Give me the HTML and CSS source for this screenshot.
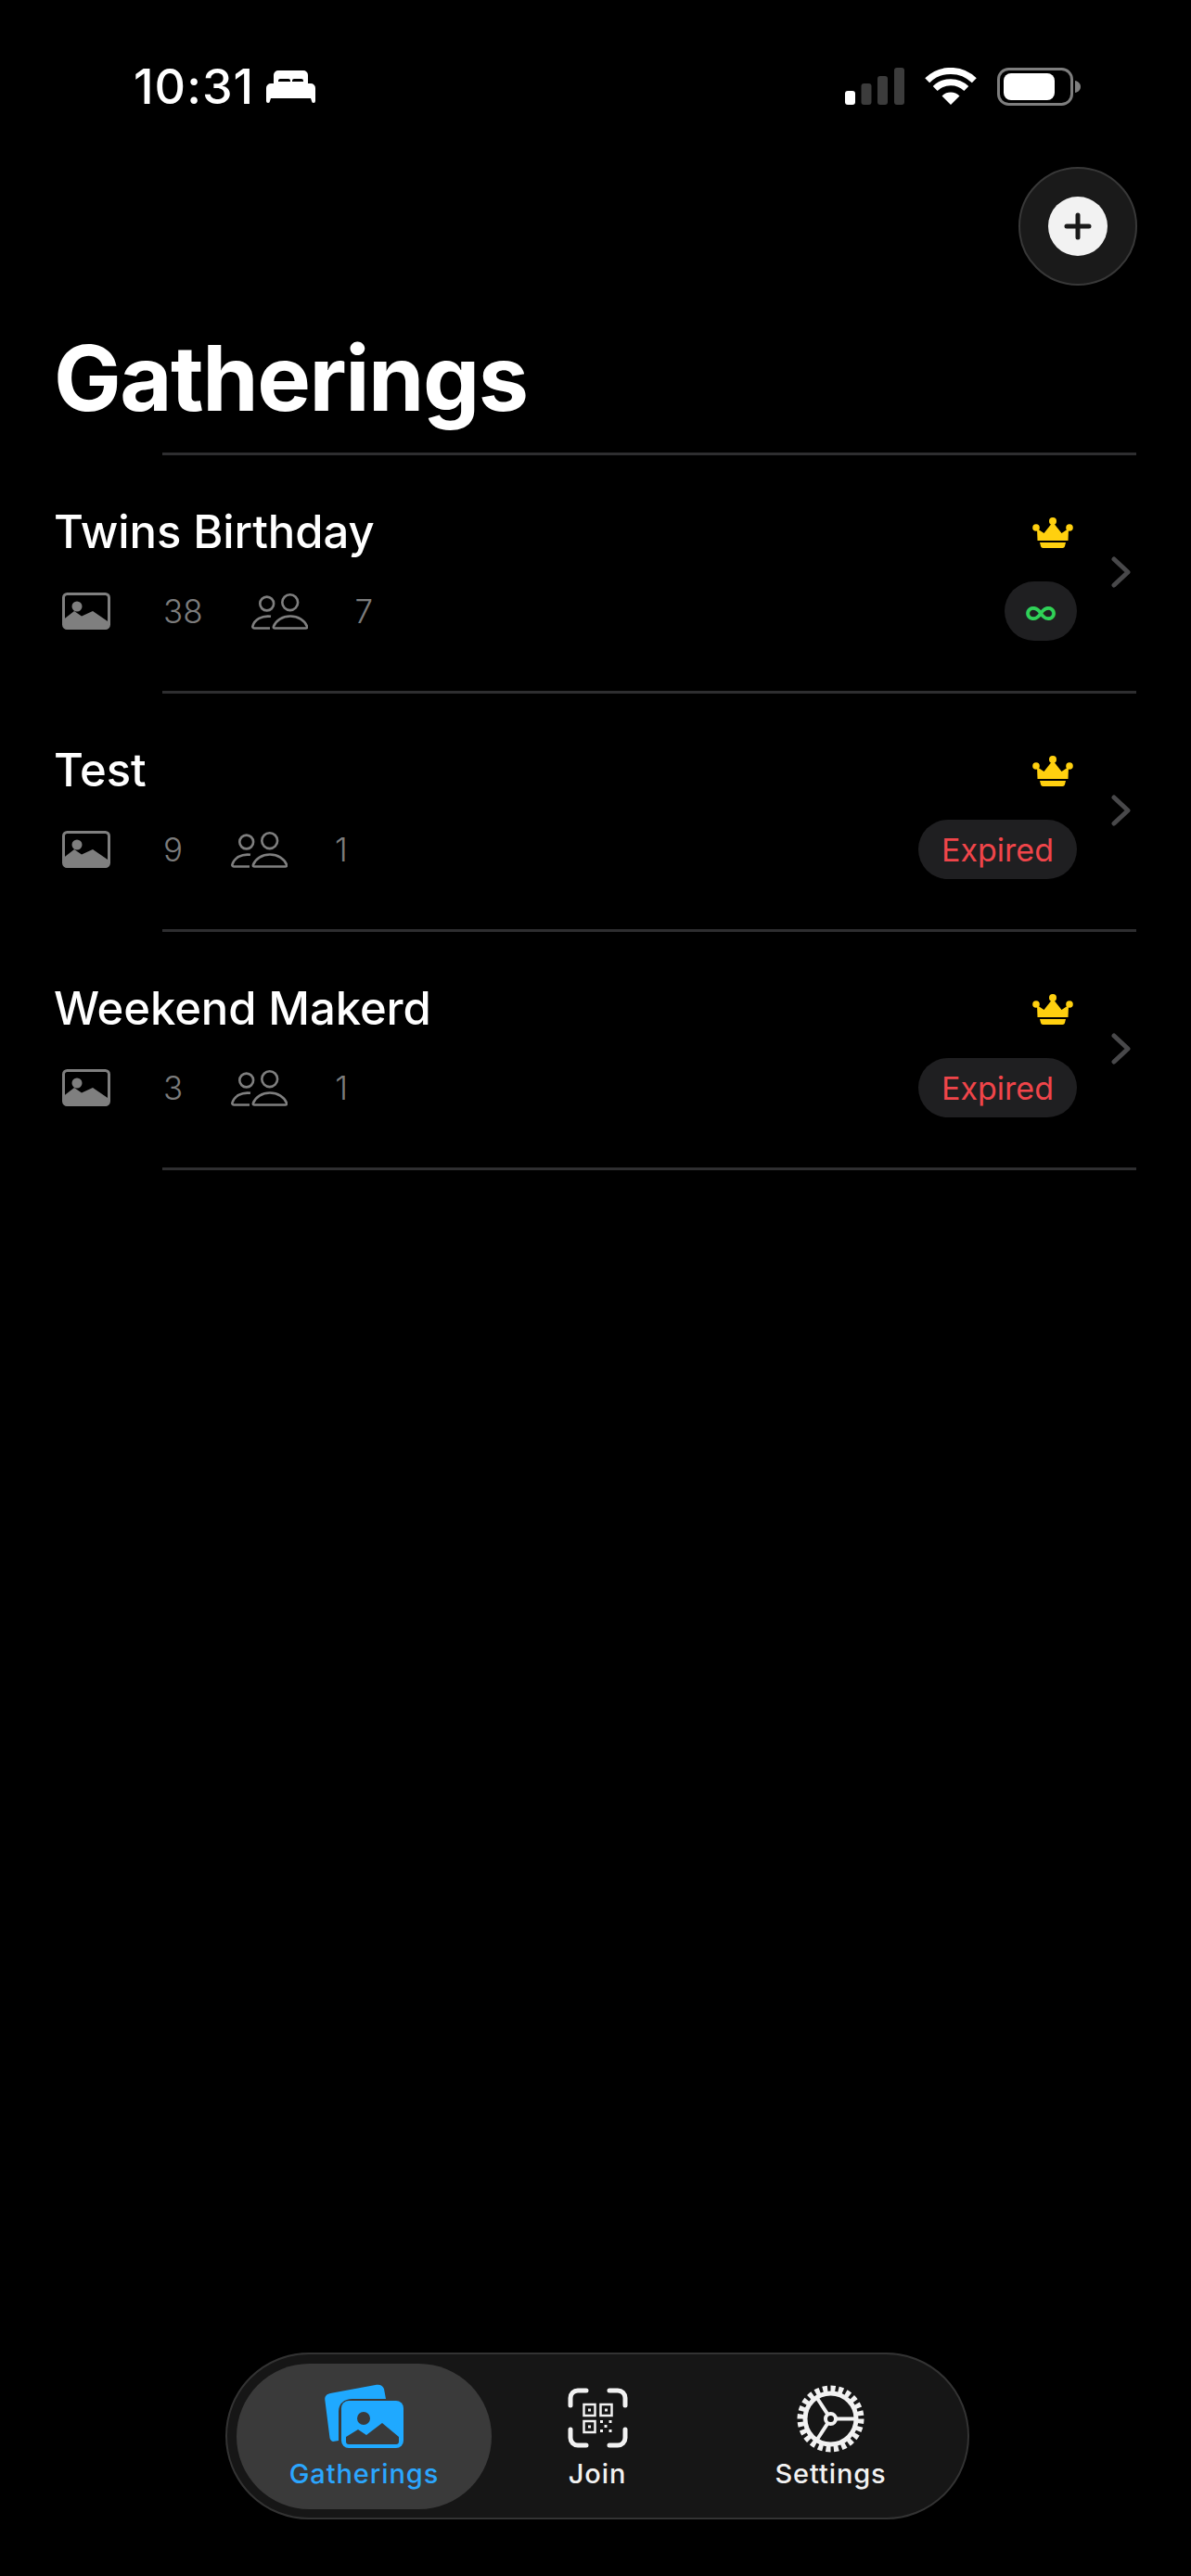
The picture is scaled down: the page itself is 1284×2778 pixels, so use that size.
FILE: index.html
```html
<!DOCTYPE html>
<html lang="en">
<head>
<meta charset="utf-8">
<title>Gatherings</title>
<link rel="stylesheet" href="styles.css">
</head>
<body>
<div class="screen">
  <header class="status">
    <div class="status-left">
      <span class="time">10:31</span>
      <svg class="bed" viewBox="0 0 53 35"><path fill-rule="evenodd" d="M8 5a5 5 0 0 1 5-5h27a5 5 0 0 1 5 5v9H8zM13 12h13v-1a2 2 0 0 0-2-2h-9a2 2 0 0 0-2 2zM28 12h12v-1a2 2 0 0 0-2-2h-8a2 2 0 0 0-2 2z"/><path d="M5 14h43a5 5 0 0 1 5 5v14a2 2 0 0 1-4 0l-1-3H5l-1 3a2 2 0 0 1-4 0V19a5 5 0 0 1 5-5z"/></svg>
    </div>
    <div class="status-right">
      <svg class="signal" viewBox="0 0 64 40"><rect x="0" y="25" width="11" height="15" rx="3" fill="#fff"/><rect x="17.500" y="17" width="11" height="23" rx="3" fill="#3c3c3c"/><rect x="35" y="9" width="11" height="31" rx="3" fill="#3c3c3c"/><rect x="53" y="0" width="11" height="40" rx="3" fill="#3c3c3c"/></svg>
      <svg class="wifi" viewBox="0 0 56 40"><path d="M28 40 18.500 30.500a13.400 13.400 0 0 1 19 0z" fill="#fff"/><path d="M11.200 22.500A24 24 0 0 1 44.800 22.500M2.700 13.800A36 36 0 0 1 53.300 13.800" fill="none" stroke="#fff" stroke-width="7"/></svg>
      <svg class="battery" viewBox="0 0 90 41"><rect x="1.500" y="1.500" width="79" height="38" rx="11" fill="none" stroke="#7e7e7e" stroke-width="3"/><rect x="7" y="6" width="55" height="29" rx="8" fill="#fff"/><path d="M84 14c3 .5 6 3 6 6.500S87 26.500 84 27z" fill="#7e7e7e"/></svg>
    </div>
  </header>

  <div class="toolbar">
    <button class="add-btn" type="button" aria-label="Add">
      <span class="add-inner">
        <svg class="plus" viewBox="0 0 30 30"><path d="M15 3v24M3 15h24" stroke="#1a1a1a" stroke-width="5" stroke-linecap="round"/></svg>
      </span>
    </button>
  </div>

  <h1 class="page-title">Gatherings</h1>

  <div class="sep"></div>
  <article class="row">
    <div class="row-body">
      <div class="line">
        <h2 class="row-title">Twins Birthday</h2>
        <svg class="crown" viewBox="0 0 44 33"><use href="#crown-shape"/></svg>
      </div>
      <div class="line">
        <div class="stats">
          <svg class="pic" viewBox="0 0 52 40"><use href="#pic-shape"/></svg>
          <span class="count count-photo">38</span>
          <svg class="people" viewBox="0 0 61 39"><use href="#people-shape"/></svg>
          <span class="count count-people">7</span>
        </div>
        <span class="badge badge-inf">∞</span>
      </div>
    </div>
    <svg class="chevron" viewBox="0 0 21 34"><path d="M3 3l15 14L3 31" fill="none" stroke="#48484a" stroke-width="5" stroke-linecap="round" stroke-linejoin="round"/></svg>
  </article>

  <div class="sep"></div>
  <article class="row">
    <div class="row-body">
      <div class="line">
        <h2 class="row-title">Test</h2>
        <svg class="crown" viewBox="0 0 44 33"><use href="#crown-shape"/></svg>
      </div>
      <div class="line">
        <div class="stats">
          <svg class="pic" viewBox="0 0 52 40"><use href="#pic-shape"/></svg>
          <span class="count count-photo">9</span>
          <svg class="people" viewBox="0 0 61 39"><use href="#people-shape"/></svg>
          <span class="count count-people">1</span>
        </div>
        <span class="badge badge-exp">Expired</span>
      </div>
    </div>
    <svg class="chevron" viewBox="0 0 21 34"><path d="M3 3l15 14L3 31" fill="none" stroke="#48484a" stroke-width="5" stroke-linecap="round" stroke-linejoin="round"/></svg>
  </article>

  <div class="sep"></div>
  <article class="row">
    <div class="row-body">
      <div class="line">
        <h2 class="row-title">Weekend Makerd</h2>
        <svg class="crown" viewBox="0 0 44 33"><use href="#crown-shape"/></svg>
      </div>
      <div class="line">
        <div class="stats">
          <svg class="pic" viewBox="0 0 52 40"><use href="#pic-shape"/></svg>
          <span class="count count-photo">3</span>
          <svg class="people" viewBox="0 0 61 39"><use href="#people-shape"/></svg>
          <span class="count count-people">1</span>
        </div>
        <span class="badge badge-exp">Expired</span>
      </div>
    </div>
    <svg class="chevron" viewBox="0 0 21 34"><path d="M3 3l15 14L3 31" fill="none" stroke="#48484a" stroke-width="5" stroke-linecap="round" stroke-linejoin="round"/></svg>
  </article>
  <div class="sep"></div>

  <div class="spacer"></div>

  <nav class="tabbar">
    <a class="tab tab-active">
      <svg class="tab-icon icon-gather" viewBox="0 0 85 69">
        <path d="M6 10 56 .8c4-.6 7 1 8 4.500L66 16H30c-9 0-15 5-15 14v31l-6 1c-2-.5-3-2-3.500-4L.3 17C0 13 2 11 6 10z" fill="#1fa9ff"/>
        <rect x="18" y="18" width="67" height="51" rx="8" fill="#1fa9ff"/>
        <circle cx="42" cy="37" r="7" fill="#3a3a3a"/>
        <path d="M23 62V57l13-8 9 6 17-13 18 15v5c0 2-1 3-3 3H26c-2 0-3-1-3-3z" fill="#3a3a3a"/>
      </svg>
      <span class="tab-label">Gatherings</span>
    </a>
    <a class="tab">
      <svg class="tab-icon icon-join" viewBox="0 0 65 65">
        <g fill="none" stroke="#f2f2f2" stroke-width="5" stroke-linecap="round">
          <path d="M20 3H11a8 8 0 0 0-8 8v8M45 3h9a8 8 0 0 1 8 8v8M20 62H11a8 8 0 0 1-8-8v-9M45 62h9a8 8 0 0 0 8-8v-9"/>
        </g>
        <g fill="none" stroke="#f2f2f2" stroke-width="2.500">
          <rect x="17.500" y="18" width="12" height="12"/>
          <rect x="35.500" y="18" width="12" height="12"/>
          <rect x="17.500" y="36" width="12" height="12"/>
        </g>
        <g fill="#f2f2f2">
          <rect x="22" y="22.500" width="3" height="3"/><rect x="40" y="22.500" width="3" height="3"/><rect x="22" y="40.500" width="3" height="3"/>
          <rect x="35" y="35" width="3" height="3"/><rect x="44.500" y="35" width="3" height="3"/><rect x="39.500" y="40" width="3" height="3"/><rect x="35" y="45" width="3" height="3"/><rect x="44.500" y="45" width="3" height="3"/>
        </g>
      </svg>
      <span class="tab-label">Join</span>
    </a>
    <a class="tab">
      <svg class="tab-icon icon-gear" viewBox="0 0 73 73">
        <g fill="none" stroke="#f2f2f2">
          <circle cx="36.500" cy="36.500" r="27.500" stroke-width="5"/>
          <circle cx="36.500" cy="36.500" r="32.500" stroke-width="7" pathLength="24" stroke-dasharray=".6 .4"/>
          <circle cx="36.500" cy="36.500" r="5.500" stroke-width="4"/>
          <path d="M42.500 36.500H64M33.300 31.600 21.500 13.500M33.300 41.400 21.500 59.500" stroke-width="4"/>
        </g>
      </svg>
      <span class="tab-label">Settings</span>
    </a>
  </nav>
</div>

<svg class="defs" aria-hidden="true">
  <defs>
    <g id="crown-shape" fill="#ffd00f">
      <circle cx="22" cy="4" r="4"/><circle cx="4" cy="11" r="3.800"/><circle cx="40" cy="11" r="3.800"/>
      <path d="M5 12 12.500 17 22 5l9.500 12L39 12l-.5 13h-33z"/>
      <path d="M8 27h28l-1 4c-.3 1.300-1.200 2-2.500 2h-21c-1.300 0-2.200-.7-2.500-2z"/>
    </g>
    <g id="pic-shape">
      <rect x="1.500" y="1.500" width="49" height="37" rx="4" fill="none" stroke="#7f7f7f" stroke-width="3"/>
      <circle cx="16" cy="15" r="5.500" fill="#7f7f7f"/>
      <path d="M1.500 29 13 20l8 5.600L33 20l17.500 12v3a5 5 0 0 1-5 5h-39a5 5 0 0 1-5-5z" fill="#7f7f7f"/>
    </g>
    <g id="people-shape" fill="none" stroke="#7f7f7f" stroke-width="2.600">
      <circle cx="41.700" cy="9.700" r="8.400"/>
      <circle cx="16.700" cy="11" r="7.400"/>
      <path d="M25.500 37.500h33c1.500 0 2-.8 1.500-2C57.500 29 50.500 24.500 42 24.500S26.500 29 24 35.500c-.5 1.200 0 2 1.500 2z"/>
      <path d="M21 24.800C11 23.500 3.500 28.500 1.500 35c-.5 1.500.3 2.500 2 2.500H20"/>
    </g>
  </defs>
</svg>
</body>
</html>
```

FILE: styles.css
```css
* { box-sizing: border-box; }
html, body { margin: 0; padding: 0; background: #000; }
body { font-family: Inter, "Liberation Sans", sans-serif; color: #fff; }

.screen { width: 1284px; height: 2778px; display: flex; flex-direction: column; background: #000; overflow: hidden; }

/* status bar */
.status { height: 114px; padding: 73px 119px 0 144px; display: flex; justify-content: space-between; align-items: flex-start; }
.status-left { display: flex; align-items: center; gap: 13px; height: 41px; }
.time { font-size: 52px; font-weight: 500; line-height: 41px; letter-spacing: 1px; }
.bed { width: 53px; height: 35px; fill: #fff; }
.status-right { display: flex; align-items: flex-start; }
.signal { width: 64px; height: 40px; }
.wifi { width: 56px; height: 40px; margin-left: 22px; }
.battery { width: 90px; height: 41px; margin-left: 22px; }

/* toolbar */
.toolbar { display: flex; justify-content: flex-end; padding: 66px 58px 0 0; }
.add-btn { width: 128px; height: 128px; padding: 0; border-radius: 50%; background: #1a1a1a; border: 2px solid #383838; display: flex; align-items: center; justify-content: center; }
.add-inner { width: 64px; height: 64px; border-radius: 50%; background: #f2f2f2; display: flex; align-items: center; justify-content: center; }
.plus { width: 30px; height: 30px; }

.page-title { margin: 45px 0 0 58px; font-size: 97px; line-height: 110px; font-weight: 700; letter-spacing: -1.500px; height: 135px; }

.sep { height: 3px; margin: 0 59px 0 175px; background: #2e2e30; flex: none; }

/* rows */
.row { height: 254px; flex: none; padding: 55px 65px 0 58px; display: flex; align-items: flex-start; position: relative; }
.row-body { flex: 1; display: flex; flex-direction: column; gap: 25px; margin-right: 58px; }
.line { display: flex; justify-content: space-between; align-items: center; }
.row-title { margin: 0; font-size: 49px; line-height: 56px; font-weight: 500; letter-spacing: -.1px; }
.crown { width: 44px; height: 33px; margin-right: 4px; }
.stats { display: flex; align-items: center; padding-left: 9px; }
.pic { width: 52px; height: 40px; flex: none; }
.people { width: 61px; height: 39px; flex: none; margin-left: 52px; }
.count { font-size: 35px; line-height: 40px; color: #7c7c7c; font-weight: 300; }
.count-photo { margin-left: 57px; }
.count-people { margin-left: 51px; }
.badge { height: 64px; border-radius: 32px; background: #1f1f21; display: flex; align-items: center; justify-content: center; }
.badge-inf { width: 78px; color: #30d158; font-size: 37px; font-weight: 500; }
.badge-exp { width: 171px; color: #f0454a; font-size: 34px; }
.chevron { width: 21px; height: 34px; position: absolute; right: 65px; top: 109px; }

.spacer { flex: 1; }

/* tab bar */
.tabbar { align-self: center; width: 802px; height: 180px; margin: 0 0 61px 4px; padding: 10px; border: 2px solid #333; border-radius: 90px; background: #161616; display: grid; grid-template-columns: 275px 228px 275px; }
.tab { display: flex; flex-direction: column; align-items: center; border-radius: 79px; height: 157px; position: relative; }
.tab-active { background: #3a3a3a; }
.tab-icon { position: absolute; }
.icon-gather { width: 85px; height: 69px; top: 22px; }
.icon-join { width: 65px; height: 65px; top: 26px; }
.icon-gear { width: 73px; height: 73px; top: 23px; }
.tab-label { margin-top: 100px; font-size: 29px; line-height: 38px; font-weight: 500; color: #f2f2f2; letter-spacing: .9px; }
.tab-active .tab-label { color: #2ba6ff; }

.defs { width: 0; height: 0; position: absolute; }
```
